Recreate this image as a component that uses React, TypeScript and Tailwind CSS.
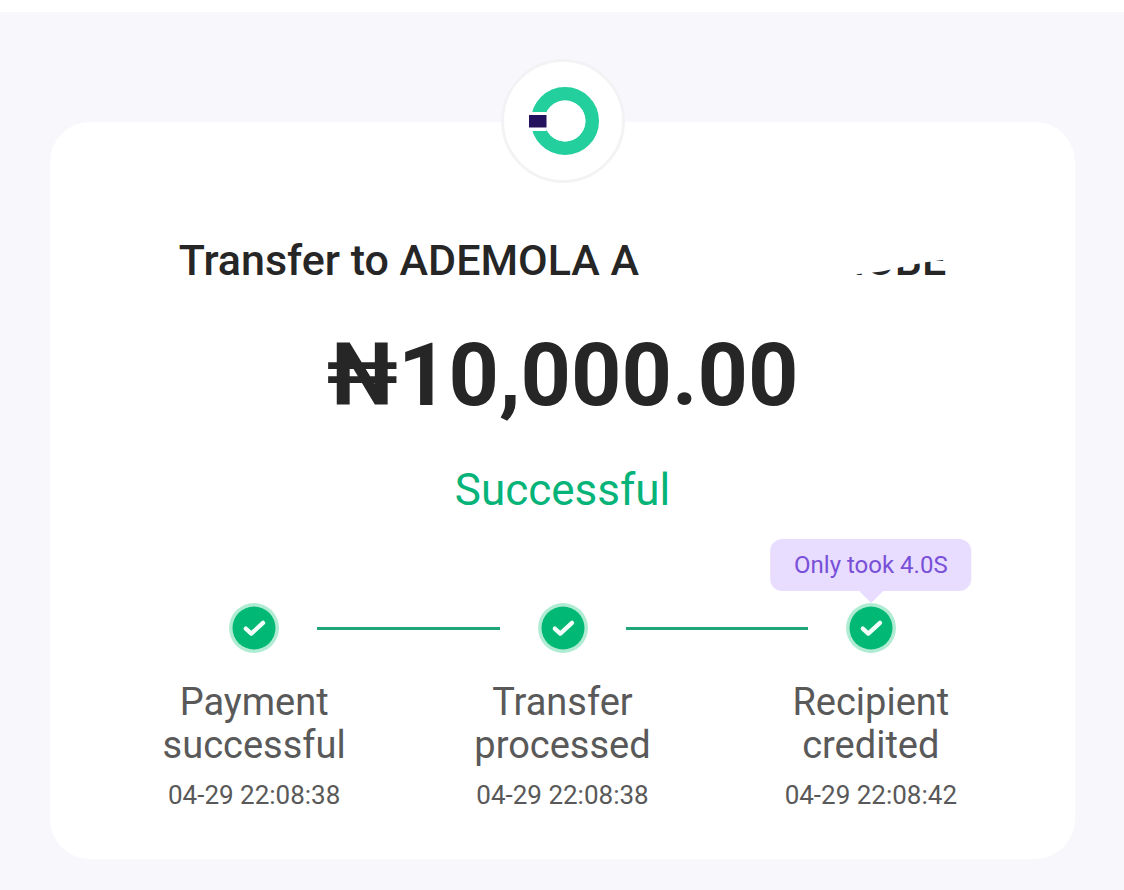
type Step = { title: string[]; time: string; note?: string };

const steps: Step[] = [
  { title: ["Payment", "successful"], time: "04-29 22:08:38" },
  { title: ["Transfer", "processed"], time: "04-29 22:08:38" },
  { title: ["Recipient", "credited"], time: "04-29 22:08:42", note: "Only took 4.0S" },
];

function BankLogo() {
  return (
    <div className="flex size-[124px] items-center justify-center rounded-full border-[3px] border-[#f3f3f5] bg-white">
      <svg viewBox="0 0 76 76" className="size-[76px]" aria-hidden="true">
        <circle cx="40" cy="38" r="27.2" fill="none" stroke="#22cf9d" strokeWidth="13.6" />
        <rect x="0" y="29" width="21.5" height="19" fill="#fff" />
        <circle cx="40" cy="38" r="20.4" fill="#fff" />
        <rect x="4" y="32" width="17.5" height="12.5" fill="#24125f" />
      </svg>
    </div>
  );
}

function CheckMark() {
  return (
    <svg viewBox="0 0 50 50" className="block size-[50px] shrink-0" aria-hidden="true">
      <circle cx="25" cy="25" r="25" fill="#b0ecd3" />
      <circle cx="25" cy="25" r="21.5" fill="#02b875" />
      <path
        d="M16.8 25.6 L22.3 30.6 L34 19.9"
        fill="none"
        stroke="#f2fffa"
        strokeWidth="4.3"
        strokeLinecap="round"
        strokeLinejoin="round"
      />
    </svg>
  );
}

function Marker({ note }: { note?: string }) {
  return (
    <div className="relative shrink-0">
      {note && (
        <div className="absolute bottom-full left-1/2 mb-3 -translate-x-1/2 rounded-xl bg-[#e8dcff] px-6 py-2 text-2xl leading-9 whitespace-nowrap text-[#7850d8]">
          {note}
          <svg viewBox="0 0 24 12" className="absolute top-full left-1/2 h-3 w-6 -translate-x-1/2" aria-hidden="true">
            <path d="M0 0 H24 L12 12 Z" fill="#e8dcff" />
          </svg>
        </div>
      )}
      <CheckMark />
    </div>
  );
}

export default function App() {
  return (
    <div className="min-h-screen bg-white pt-3 font-['Roboto',sans-serif]">
      <main className="min-h-[calc(100vh-12px)] bg-[#f7f7fc] pt-[110px] pr-[49px] pb-[30px] pl-[50px]">
        <section className="flow-root rounded-[40px] bg-white pb-12">
          <div className="-mt-[63px] flex justify-center">
            <BankLogo />
          </div>
          <h1 className="mt-[51px] flex justify-center text-[43px] leading-[52px] font-medium text-[#262626]">
            <span className="whitespace-nowrap">Transfer to ADEMOLA A</span>
            <span className="ml-[214px] [clip-path:polygon(0_80%,6%_77%,31%_72%,46%_66%,76%_55%,100%_49%,100%_100%,0_100%)]">
              IOBE
            </span>
          </h1>
          <p className="mt-[37px] text-center text-[88px] leading-[104px] font-bold text-[#262626]">₦10,000.00</p>
          <p className="mt-[37px] text-center text-[44px] leading-[52px] text-[#06b378]">Successful</p>
          <div className="mx-[50px] mt-[87px]">
            <div className="mx-[calc(100%/6-25px)] flex items-center">
              <Marker />
              <div className="mx-[38px] h-[3px] flex-1 bg-[#1fa578]" />
              <Marker />
              <div className="mx-[38px] h-[3px] flex-1 bg-[#1fa578]" />
              <Marker note={steps[2].note} />
            </div>
            <ol className="mt-7 grid grid-cols-3 text-center text-[#595959]">
              {steps.map((step) => (
                <li key={step.title[0]}>
                  <h2 className="text-[38px] leading-[43px]">
                    {step.title[0]}
                    <br />
                    {step.title[1]}
                  </h2>
                  <time className="mt-3 block text-[26px] leading-8">{step.time}</time>
                </li>
              ))}
            </ol>
          </div>
        </section>
      </main>
    </div>
  );
}
